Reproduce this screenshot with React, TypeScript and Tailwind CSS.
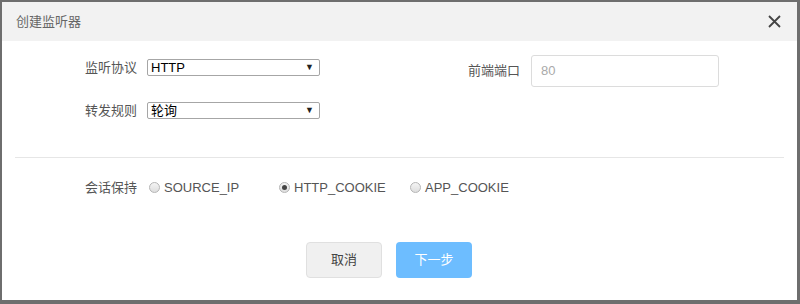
import React from "react";

const font = { fontFamily: '"Liberation Sans", Arial, "Noto Sans CJK SC", sans-serif' };

function FakeSelect({ value }: { value: string }) {
  return (
    <div className="flex h-[17px] w-[173px] items-center justify-between rounded-[2px] border border-[#a6a6a6] bg-white pl-[3px] pr-[5px] text-[13px] leading-none text-black">
      <span>{value}</span>
      <span className="text-[9px] text-[#222]">▼</span>
    </div>
  );
}

function Radio({ checked, label }: { checked?: boolean; label: string }) {
  return (
    <div className="flex items-center gap-[4px]">
      <span className="flex h-[11px] w-[11px] items-center justify-center rounded-full border border-[#b5b5b5] bg-gradient-to-b from-[#f4f4f4] to-[#dedede]">
        {checked && <span className="h-[5px] w-[5px] rounded-full bg-[#444]" />}
      </span>
      <span className="text-[13px] text-[#555]">{label}</span>
    </div>
  );
}

export default function App() {
  return (
    <div className="h-[304px] w-[800px] bg-[#6e6e6e] pb-[4px] pl-[2px] pr-[3px] pt-[2px]" style={font}>
      <div className="flex h-full w-full flex-col bg-white">
        <div className="flex h-[39px] items-center justify-between bg-[#f2f2f2] pl-[14px] pr-[14px]">
          <span className="text-[13px] text-[#666]">创建监听器</span>
          <svg width="13" height="13" viewBox="0 0 13 13" className="mr-[2px]">
            <path d="M1 1L12 12M12 1L1 12" stroke="#444" strokeWidth="1.8" />
          </svg>
        </div>
        <div className="flex pl-[83px] pt-[14px]">
          <div className="mt-[3px] flex flex-col gap-[23px]">
            <div className="flex items-center gap-[10px]">
              <span className="text-[13px] text-[#555]">监听协议</span>
              <FakeSelect value="HTTP" />
            </div>
            <div className="flex items-center gap-[10px]">
              <span className="text-[13px] text-[#555]">转发规则</span>
              <FakeSelect value="轮询" />
            </div>
          </div>
          <div className="ml-[148px] flex items-center gap-[11px] self-start">
            <span className="text-[13px] text-[#555]">前端端口</span>
            <div className="flex h-[32px] w-[188px] items-center rounded-[3px] border border-[#dcdcdc] pl-[9px] text-[13px] text-[#aaa]">
              80
            </div>
          </div>
        </div>
        <div className="mx-[13px] mt-[37px] h-px bg-[#e6e6e6]" />
        <div className="mt-[20px] flex items-center pl-[83px]">
          <span className="mr-[12px] text-[13px] text-[#555]">会话保持</span>
          <div className="w-[130px]"><Radio label="SOURCE_IP" /></div>
          <div className="w-[131px]"><Radio checked label="HTTP_COOKIE" /></div>
          <Radio label="APP_COOKIE" />
        </div>
        <div className="mt-[44px] flex gap-[14px] pl-[304px]">
          <button className="h-[36px] w-[76px] rounded-[4px] border border-[#e0e0e0] bg-[#f0f0f0] text-[13px] text-[#444]">取消</button>
          <button className="h-[36px] w-[76px] rounded-[4px] bg-[#6dbdff] text-[13px] text-white">下一步</button>
        </div>
      </div>
    </div>
  );
}
